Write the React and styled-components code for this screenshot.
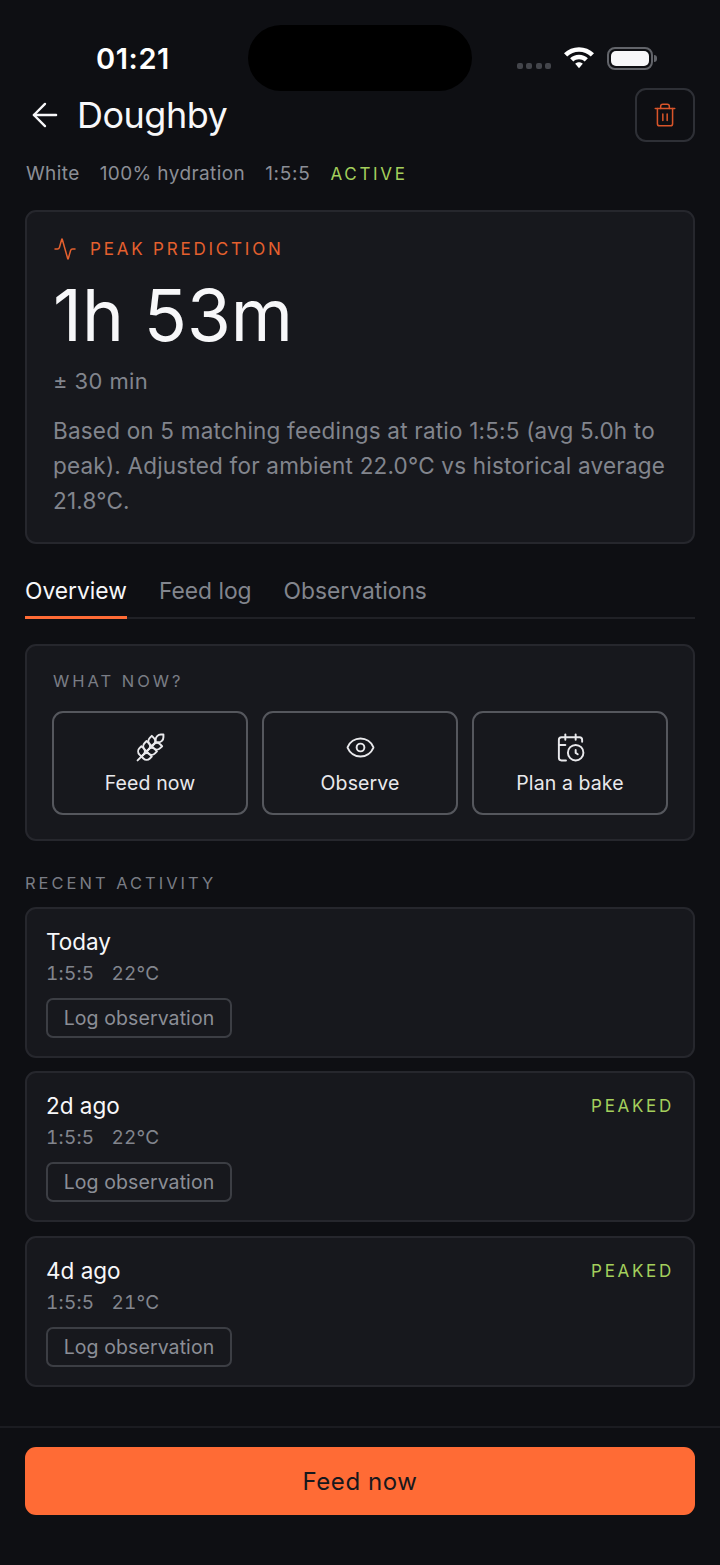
import React from 'react';
import styled, { createGlobalStyle } from 'styled-components';
import { ArrowLeft, Trash2, Activity, Wheat, Eye, CalendarClock } from 'lucide-react';

const Global = createGlobalStyle`
  html, body { margin: 0; padding: 0; background: #0e0f13; }
  * { box-sizing: border-box; }
  body { font-family: Inter, "Liberation Sans", sans-serif; color: #f7f7f9; }
`;

const Page = styled.div`
  position: relative;
  width: 720px;
  height: 1565px;
  background: #0e0f13;
  overflow: hidden;
  display: flex;
  flex-direction: column;
`;

const StatusBar = styled.div`
  height: 88px;
  flex: none;
  display: flex;
  padding: 44px 67px 0 96px;
  justify-content: space-between;
`;

const Clock = styled.div`
  font-size: 29px;
  line-height: 30px;
  font-weight: 600;
  letter-spacing: 0.6px;
  color: #fff;
`;

const Island = styled.div`
  position: absolute;
  left: 248px;
  top: 25px;
  width: 224px;
  height: 66px;
  border-radius: 33px;
  background: #000;
`;

const StatusIcons = styled.div`
  display: flex;
  align-items: flex-start;
`;

const Signal = styled.div`
  display: flex;
  gap: 3.3px;
  margin: 19px 13px 0 0;
`;

const Dot = styled.span`
  width: 6px;
  height: 6px;
  border-radius: 2px;
  background: #43454b;
`;

const WifiIcon = styled.svg`
  margin-top: 3px;
`;

const Battery = styled.div`
  position: relative;
  width: 46px;
  height: 23px;
  margin: 3px 0 0 13px;
  border: 2px solid #62646a;
  border-radius: 8px;
  padding: 2px;
  &::before {
    content: '';
    display: block;
    height: 100%;
    border-radius: 5px;
    background: #f7f7f9;
  }
  &::after {
    content: '';
    position: absolute;
    right: -6px;
    top: 6px;
    width: 3px;
    height: 7px;
    border-radius: 0 3px 3px 0;
    background: #62646a;
  }
`;

const Content = styled.main`
  padding: 0 25px;
  flex: 1;
  display: flex;
  flex-direction: column;
`;

const Header = styled.header`
  display: flex;
  align-items: center;
  height: 54px;
`;

const BackIcon = styled(ArrowLeft)`
  width: 38px;
  height: 38px;
  color: #f7f7f9;
  stroke-width: 1.5;
  margin-left: 1px;
`;

const Title = styled.h1`
  flex: 1;
  margin: 0 0 0 13px;
  font-size: 36px;
  line-height: 44px;
  font-weight: 400;
  letter-spacing: -0.5px;
  color: #f7f7f9;
`;

const TrashButton = styled.button`
  width: 60px;
  height: 54px;
  display: flex;
  align-items: center;
  justify-content: center;
  background: transparent;
  border: 2px solid #2e3036;
  border-radius: 11px;
  padding: 0;
  color: #d9552a;
`;

const Meta = styled.div`
  display: flex;
  gap: 20px;
  margin: 20px 0 0 1px;
  font-size: 19px;
  line-height: 24px;
  letter-spacing: 0.4px;
  color: #8b8e96;
`;

const Ratio = styled.span`
  letter-spacing: 0.7px;
`;

const Status = styled.span`
  font-size: 17px;
  line-height: 24px;
  letter-spacing: 2.7px;
  color: #a4cf5c;
`;

const Card = styled.section`
  background: #17181d;
  border: 2px solid #26272d;
  border-radius: 11px;
`;

const PeakCard = styled(Card)`
  margin-top: 24px;
  height: 334px;
  padding: 24px 20px 0 26px;
`;

const PeakLabel = styled.div`
  display: flex;
  align-items: center;
  gap: 13px;
  font-size: 17px;
  line-height: 26px;
  letter-spacing: 2.8px;
  color: #e5602e;
`;

const PeakValue = styled.div`
  margin: 11px 0 0;
  font-size: 71px;
  line-height: 84px;
  font-weight: 400;
  color: #f7f7f9;
`;

const Range = styled.div`
  margin-top: 9px;
  font-size: 22px;
  line-height: 30px;
  letter-spacing: 0.4px;
  color: #82858d;
`;

const Explain = styled.p`
  margin: 17px 0 0;
  font-size: 22.5px;
  line-height: 35px;
  letter-spacing: 0.2px;
  color: #82858d;
`;

const Tabs = styled.nav`
  display: flex;
  gap: 32px;
  margin-top: 26px;
  height: 49px;
  border-bottom: 2px solid #202126;
`;

const Tab = styled.div`
  height: 49px;
  font-size: 22.8px;
  line-height: 42px;
  color: ${p => p.$active ? '#f7f7f9' : '#82858d'};
  border-bottom: 3px solid ${p => p.$active ? '#ff6b35' : 'transparent'};
`;

const NowCard = styled(Card)`
  margin-top: 25px;
  height: 197px;
  padding: 23px 25px 0;
`;

const SectionLabel = styled.div`
  font-size: 16.5px;
  line-height: 24px;
  letter-spacing: 3px;
  color: #7a7d85;
`;

const NowLabel = styled(SectionLabel)`
  margin-left: 1px;
`;

const Actions = styled.div`
  display: grid;
  grid-template-columns: repeat(3, 1fr);
  gap: 14px;
  margin-top: 18px;
`;

const Action = styled.button`
  height: 104px;
  background: transparent;
  border: 2px solid #55575d;
  border-radius: 11px;
  display: flex;
  flex-direction: column;
  align-items: center;
  justify-content: flex-start;
  gap: 7px;
  padding: 19px 0 0;
  font-family: inherit;
  font-size: 19.5px;
  line-height: 26px;
  letter-spacing: 0.1px;
  color: #e9e9ec;
`;

const ActivityLabel = styled(SectionLabel)`
  margin-top: 30px;
  margin-bottom: 12px;
`;

const Feedings = styled.div`
  display: flex;
  flex-direction: column;
  gap: 13.4px;
`;

const FeedCard = styled(Card)`
  height: 151px;
  padding: 19px 19px 0;
`;

const FeedTop = styled.div`
  display: flex;
  justify-content: space-between;
  align-items: center;
`;

const When = styled.div`
  font-size: 22.5px;
  line-height: 28px;
  color: #f7f7f9;
`;

const FeedMeta = styled.div`
  display: flex;
  gap: 17px;
  margin-top: 5px;
  font-size: 19px;
  line-height: 26px;
  letter-spacing: 0.25px;
  font-variant-numeric: tabular-nums;
  color: #82858d;
`;

const LogButton = styled.button`
  display: block;
  margin-top: 11px;
  width: 186px;
  height: 40px;
  background: transparent;
  border: 2px solid #3c3e44;
  border-radius: 7px;
  padding: 0;
  font-family: inherit;
  font-size: 19.5px;
  letter-spacing: 0.1px;
  color: #8b8e96;
`;

const Footer = styled.footer`
  position: absolute;
  left: 0;
  right: 0;
  bottom: 0;
  height: 139px;
  padding: 19px 25px 0;
  border-top: 2px solid #1b1c21;
  background: #0e0f13;
`;

const Primary = styled.button`
  display: block;
  width: 100%;
  height: 68px;
  border: 0;
  border-radius: 11px;
  background: #ff6b35;
  font-family: inherit;
  font-size: 24px;
  letter-spacing: 0.6px;
  color: #17181d;
`;

const feedings = [
  { when: 'Today', temp: '22°C' },
  { when: '2d ago', temp: '22°C', peaked: true },
  { when: '4d ago', temp: '21°C', peaked: true },
];

export default function App() {
  return (
    <Page>
      <Global />
      <StatusBar>
        <Clock>01:21</Clock>
        <StatusIcons>
          <Signal><Dot /><Dot /><Dot /><Dot /></Signal>
          <WifiIcon width="30" height="22" viewBox="1 3 28 20" fill="#fff">
            <path d="M15 3C9.6 3 4.8 5.1 1 8.600l3 3C7 8.800 10.800 7.200 15 7.200s8 1.600 11 4.400l3-3C25.200 5.100 20.400 3 15 3z" />
            <path d="M15 10c-3.200 0-6.100 1.200-8.300 3.300l3 3C11.100 15 13 14.200 15 14.200s3.900.8 5.300 2.100l3-3C21.100 11.200 18.200 10 15 10z" />
            <path d="M15 17c-1.400 0-2.600.5-3.500 1.400L15 22.500l3.500-4.100C17.600 17.500 16.400 17 15 17z" />
          </WifiIcon>
          <Battery />
        </StatusIcons>
      </StatusBar>
      <Island />
      <Content>
        <Header>
          <BackIcon />
          <Title>Doughby</Title>
          <TrashButton><Trash2 size={26} strokeWidth={1.4} /></TrashButton>
        </Header>
        <Meta>
          <span>White</span>
          <span>100% hydration</span>
          <Ratio>1:5:5</Ratio>
          <Status>ACTIVE</Status>
        </Meta>
        <PeakCard>
          <PeakLabel><Activity size={24} strokeWidth={1.5} />PEAK PREDICTION</PeakLabel>
          <PeakValue>1h 53m</PeakValue>
          <Range>± 30 min</Range>
          <Explain>Based on 5 matching feedings at ratio 1:5:5 (avg 5.0h to peak). Adjusted for ambient 22.0°C vs historical average 21.8°C.</Explain>
        </PeakCard>
        <Tabs>
          <Tab $active>Overview</Tab>
          <Tab>Feed log</Tab>
          <Tab>Observations</Tab>
        </Tabs>
        <NowCard>
          <NowLabel>WHAT NOW?</NowLabel>
          <Actions>
            <Action><Wheat size={31} strokeWidth={1.5} />Feed now</Action>
            <Action><Eye size={31} strokeWidth={1.5} />Observe</Action>
            <Action><CalendarClock size={31} strokeWidth={1.5} />Plan a bake</Action>
          </Actions>
        </NowCard>
        <ActivityLabel>RECENT ACTIVITY</ActivityLabel>
        <Feedings>
          {feedings.map(f => (
            <FeedCard key={f.when}>
              <FeedTop>
                <When>{f.when}</When>
                {f.peaked && <Status>PEAKED</Status>}
              </FeedTop>
              <FeedMeta><span>1:5:5</span><span>{f.temp}</span></FeedMeta>
              <LogButton>Log observation</LogButton>
            </FeedCard>
          ))}
        </Feedings>
      </Content>
      <Footer><Primary>Feed now</Primary></Footer>
    </Page>
  );
}
